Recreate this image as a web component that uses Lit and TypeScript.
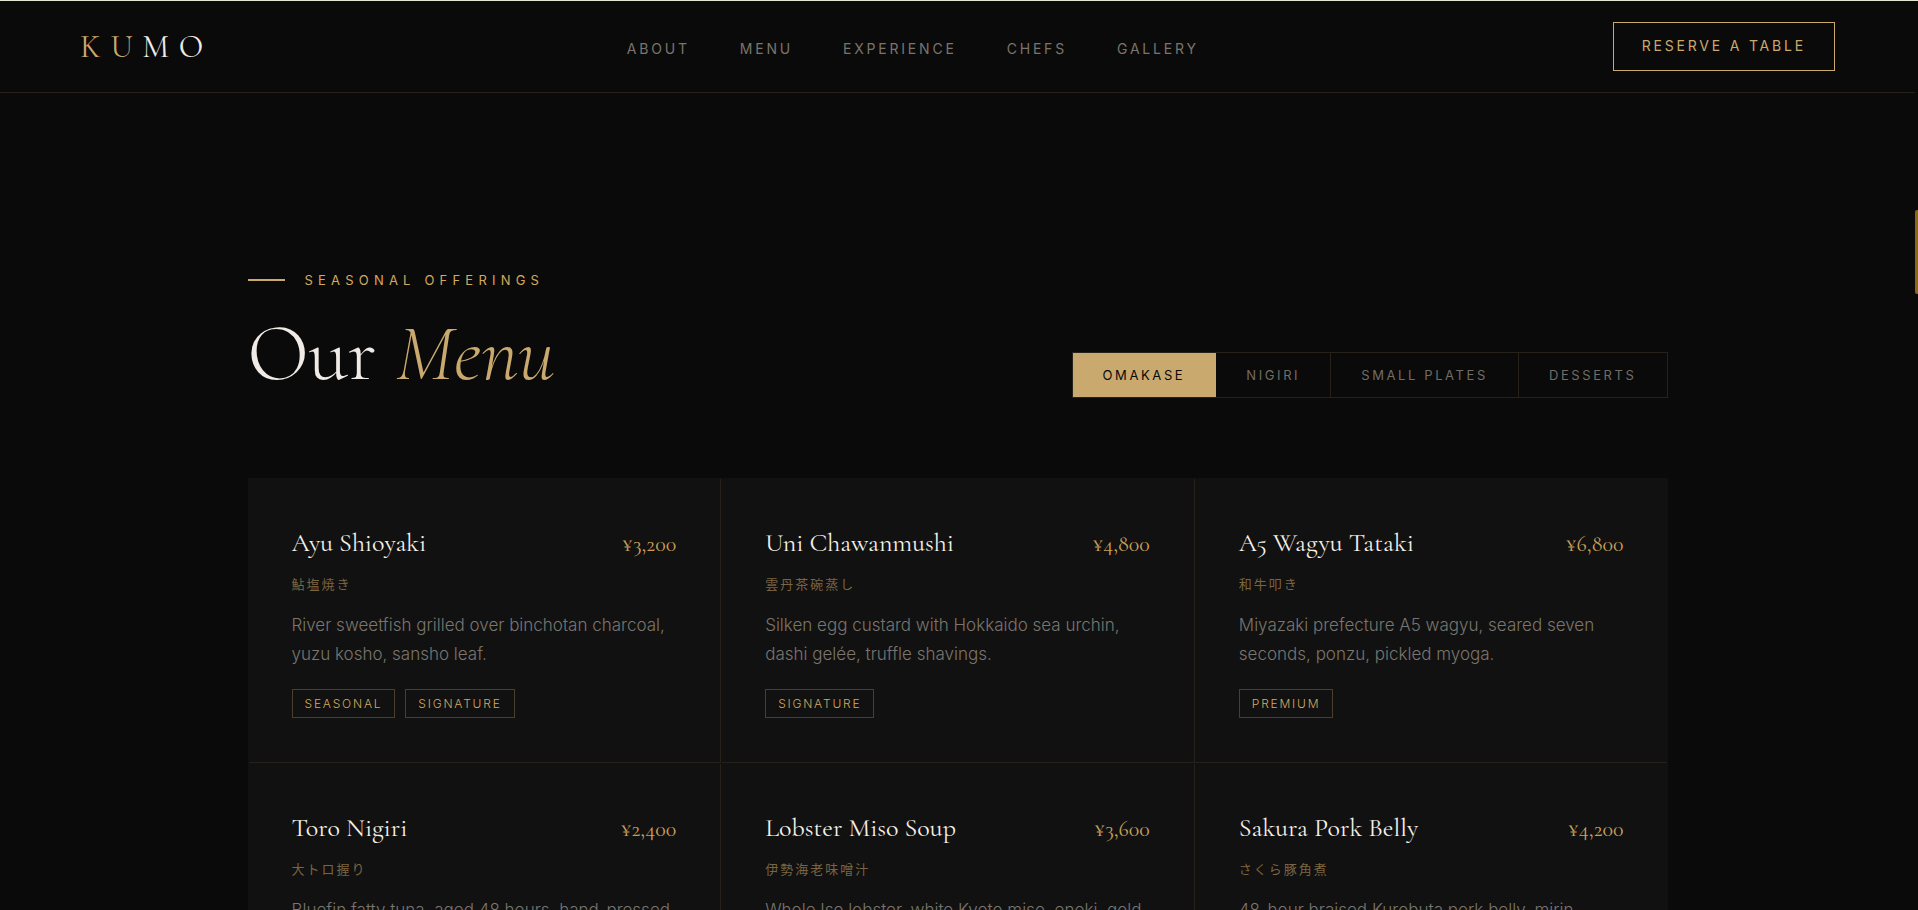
import { LitElement, html, css } from "lit";
import { customElement, property, state } from "lit/decorators.js";

interface Dish {
  name: string;
  price: string;
  jp: string;
  text: string;
  tags: string[];
}

const LINKS = ["About", "Menu", "Experience", "Chefs", "Gallery"];
const TABS = ["Omakase", "Nigiri", "Small Plates", "Desserts"];

const DISHES: Dish[] = [
  { name: "Ayu Shioyaki", price: "¥3,200", jp: "鮎塩焼き", text: "River sweetfish grilled over binchotan charcoal, yuzu kosho, sansho leaf.", tags: ["Seasonal", "Signature"] },
  { name: "Uni Chawanmushi", price: "¥4,800", jp: "雲丹茶碗蒸し", text: "Silken egg custard with Hokkaido sea urchin, dashi gelée, truffle shavings.", tags: ["Signature"] },
  { name: "A5 Wagyu Tataki", price: "¥6,800", jp: "和牛叩き", text: "Miyazaki prefecture A5 wagyu, seared seven seconds, ponzu, pickled myoga.", tags: ["Premium"] },
  { name: "Toro Nigiri", price: "¥2,400", jp: "大トロ握り", text: "Bluefin fatty tuna, aged 48 hours, hand-pressed", tags: [] },
  { name: "Lobster Miso Soup", price: "¥3,600", jp: "伊勢海老味噌汁", text: "Whole Ise lobster, white Kyoto miso, enoki, gold", tags: [] },
  { name: "Sakura Pork Belly", price: "¥4,200", jp: "さくら豚角煮", text: "48-hour braised Kurobuta pork belly, mirin", tags: [] },
];

@customElement("dish-card")
class DishCard extends LitElement {
  @property({ attribute: false }) dish!: Dish;

  static styles = css`
    :host {
      display: block;
      padding: 44px;
      background: #111111;
    }
    .head {
      display: flex;
      justify-content: space-between;
      align-items: baseline;
      gap: 16px;
      font-family: "Cormorant Garamond", "Liberation Serif", serif;
    }
    .name {
      margin: 0;
      font-size: 26px;
      font-weight: 400;
      line-height: 42px;
      color: #f5f0e8;
    }
    .price {
      font-size: 22px;
      line-height: 30px;
      color: #c9a05a;
    }
    .jp {
      margin: 9px 0 16px;
      font-family: "Noto Sans CJK JP", sans-serif;
      font-size: 13px;
      line-height: 22px;
      letter-spacing: 2px;
      color: #7a6542;
    }
    .text {
      margin: 0 0 20px;
      font-size: 17px;
      font-weight: 300;
      line-height: 29px;
      color: #7a756e;
    }
    .tags {
      display: flex;
      flex-wrap: wrap;
      gap: 10px;
      margin: 0;
      padding: 0;
      list-style: none;
    }
    .tag {
      padding: 5px 12px;
      border: 1px solid #4a3f2b;
      font-size: 12px;
      font-weight: 300;
      line-height: 17px;
      letter-spacing: 0.15em;
      text-transform: uppercase;
      color: #d4a95e;
    }
  `;

  render() {
    const d = this.dish;
    return html`
      <div class="head">
        <h3 class="name">${d.name}</h3>
        <span class="price">${d.price}</span>
      </div>
      <p class="jp" lang="ja">${d.jp}</p>
      <p class="text">${d.text}</p>
      <ul class="tags">
        ${d.tags.map((t) => html`<li class="tag">${t}</li>`)}
      </ul>
    `;
  }
}

@customElement("app-root")
class AppRoot extends LitElement {
  @state() private active = 0;

  static styles = css`
    :host {
      display: block;
      background: #0a0a0a;
      color: #f0ebe6;
      font-family: Inter, "Noto Sans CJK JP", sans-serif;
    }
    .shell {
      position: relative;
      display: flex;
      flex-direction: column;
      height: 100vh;
      border-top: 1px solid #e4e6d3;
      box-sizing: border-box;
    }
    .bar {
      display: flex;
      justify-content: space-between;
      align-items: center;
      margin-right: 3px;
      padding: 21px 80px;
      border-bottom: 1px solid #26211a;
    }
    .logo {
      font-family: "Cormorant Garamond", "Liberation Serif", serif;
      font-size: 32px;
      line-height: 40px;
      letter-spacing: 0.3em;
      color: #f0ebe6;
      text-decoration: none;
    }
    .logo-gold {
      color: #c9a96e;
    }
    .links {
      display: flex;
      gap: 50px;
      padding-top: 4px;
    }
    .link {
      font-size: 14px;
      line-height: 20px;
      letter-spacing: 0.2em;
      text-transform: uppercase;
      text-decoration: none;
      color: #7a746c;
    }
    .reserve {
      padding: 14px 28px 15px;
      border: 1px solid #c9a96e;
      background: none;
      font: 400 14px/18px Inter, sans-serif;
      letter-spacing: 0.2em;
      text-transform: uppercase;
      color: #c9a96e;
    }
    .main {
      flex: 1;
      min-height: 0;
      margin-right: 3px;
      overflow-y: auto;
      scrollbar-width: none;
    }
    .section {
      max-width: 1420px;
      margin: 0 auto;
      padding: 177px 0 120px;
    }
    .top {
      display: flex;
      justify-content: space-between;
      align-items: flex-end;
      margin-bottom: 80px;
    }
    .eyebrow {
      display: flex;
      align-items: center;
      gap: 20px;
      margin: 0 0 20px;
      font-size: 13px;
      line-height: 20px;
      letter-spacing: 0.4em;
      text-transform: uppercase;
      color: #d4a95e;
    }
    .dash {
      width: 37px;
      height: 2px;
      background: #c9a96e;
    }
    .title {
      margin: 0;
      font-family: "Cormorant Garamond", "Liberation Serif", serif;
      font-size: 80px;
      font-weight: 300;
      line-height: 88px;
    }
    .title-em {
      color: #c9a96e;
    }
    .tabs {
      display: flex;
      border: 1px solid #26211a;
    }
    .tab {
      padding: 12px 30px;
      border: 0;
      border-right: 1px solid #26211a;
      background: none;
      font: 400 13px/20px Inter, sans-serif;
      letter-spacing: 0.2em;
      text-transform: uppercase;
      color: #716c66;
    }
    .tab:last-child {
      border-right: 0;
    }
    .tab[aria-selected="true"] {
      background: #c9a96e;
      border-color: #c9a96e;
      color: #0a0a0a;
    }
    .grid {
      display: grid;
      grid-template-columns: repeat(3, 1fr);
      gap: 1px;
      background: #111111;
    }
    .card {
      box-shadow: 1px 1px 0 #26211a;
    }
    .card:nth-child(3n) {
      box-shadow: 0 1px 0 #26211a;
    }
    .thumb {
      position: absolute;
      top: 209px;
      right: 0;
      width: 3px;
      height: 84px;
      border-radius: 2px 0 0 2px;
      background: #8b6914;
    }
  `;

  render() {
    return html`
      <div class="shell">
        <header class="bar">
          <a class="logo" href="#"><span class="logo-gold">KU</span>MO</a>
          <nav class="links" aria-label="Main">
            ${LINKS.map((l) => html`<a class="link" href="#${l.toLowerCase()}">${l}</a>`)}
          </nav>
          <button class="reserve" type="button">Reserve a Table</button>
        </header>
        <main class="main">
          <section class="section">
            <div class="top">
              <div>
                <p class="eyebrow"><span class="dash"></span>Seasonal Offerings</p>
                <h2 class="title">Our <em class="title-em">Menu</em></h2>
              </div>
              <div class="tabs" role="tablist">
                ${TABS.map(
                  (t, i) => html`<button
                    class="tab"
                    type="button"
                    role="tab"
                    aria-selected=${i === this.active ? "true" : "false"}
                    @click=${() => (this.active = i)}
                  >${t}</button>`
                )}
              </div>
            </div>
            <div class="grid">
              ${DISHES.map((d) => html`<dish-card class="card" .dish=${d}></dish-card>`)}
            </div>
          </section>
        </main>
        <div class="thumb"></div>
      </div>
    `;
  }
}
